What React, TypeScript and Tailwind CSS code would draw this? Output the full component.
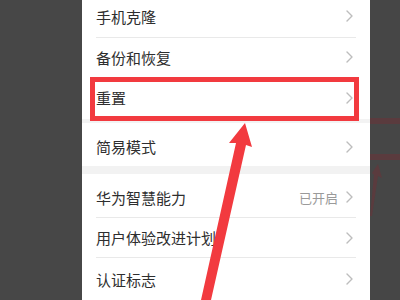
import React from "react";

const Chevron = () => (
  <svg width="7" height="12" viewBox="0 0 7 12" fill="none" className="shrink-0">
    <path d="M1 1 L6 6 L1 11" stroke="#bdbdbd" strokeWidth="1.4" strokeLinecap="round" strokeLinejoin="round" />
  </svg>
);

const Row = ({ label, value, h, pt = 0 }: { label: string; value?: string; h: string; pt?: number }) => (
  <div className={`flex items-center pl-[14px] pr-[17px] ${h}`} style={pt ? { paddingTop: pt } : undefined}>
    <span className="flex-1 text-[15px] text-[#2e2e2e] leading-none">{label}</span>
    {value && <span className="text-[13px] text-[#9a9a9a] mr-[8px] leading-none">{value}</span>}
    <Chevron />
  </div>
);

const Divider = () => <div className="h-px bg-[#e9e9e9] ml-[14px] mr-[14px]" />;

export default function App() {
  return (
    <div
      className="relative w-[400px] h-[300px] overflow-hidden flex bg-[#474747]"
      style={{ fontFamily: '"Noto Sans CJK SC", "Noto Sans", sans-serif' }}
    >
      <div className="w-[82px] bg-[#474747]" />
      <div className="w-[288px] bg-white flex flex-col -mt-[4px]">
        <Row label="手机克隆" h="h-[41px]" />
        <Divider />
        <Row label="备份和恢复" h="h-[40px]" />
        <Row label="重置" h="h-[42px]" />
        <div className="h-[4px] bg-[#f3f3f3]" />
        <Row label="简易模式" h="h-[44px]" pt={4} />
        <div className="h-[8px] bg-[#f2f2f2]" />
        <Row label="华为智慧能力" value="已开启" h="h-[43px]" pt={3} />
        <Divider />
        <Row label="用户体验改进计划" h="h-[40px]" />
        <Divider />
        <Row label="认证标志" h="h-[42px]" />
      </div>
      <div className="flex-1 bg-[#464646]" />

      {/* red highlight box */}
      <div className="absolute left-[90px] top-[77px] w-[269px] h-[44px] border-[5px] border-[#f23a3f]" />

      {/* arrows */}
      <svg className="absolute inset-0" width="400" height="300" viewBox="0 0 400 300">
        <polygon
          points="245,123 252,147 246,145 211,300 201,300 236,143 229,143"
          fill="#f23a3f"
        />
        <rect x="370" y="118" width="30" height="6" fill="#5a3b3e" />
        <rect x="370" y="154" width="30" height="6" fill="#5a3b3e" />
        <polygon points="378,164 382,178 378,176 372,216 370,216 374,175 372,173" fill="#5a3b3e" />
      </svg>
    </div>
  );
}
